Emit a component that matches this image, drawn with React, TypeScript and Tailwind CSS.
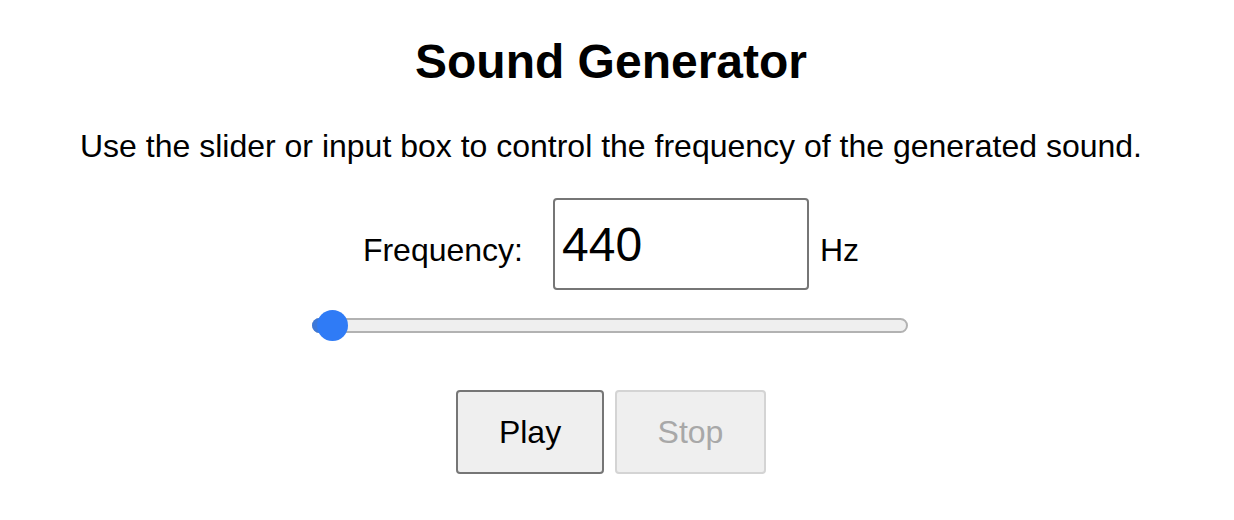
import React from "react";

export default function App() {
  return (
    <div className="w-[1222px] flex flex-col items-center bg-white text-black font-['Liberation_Sans',Arial,sans-serif]">
      <h1 className="mt-[35px] text-[48px] leading-[54px] font-bold">Sound Generator</h1>
      <p className="mt-[39px] text-[32px] leading-[37px]">
        Use the slider or input box to control the frequency of the generated sound.
      </p>
      <div className="mt-[33px] flex items-baseline">
        <label className="text-[32px] leading-[37px]">Frequency:</label>
        <input
          type="text"
          defaultValue="440"
          className="ml-[30px] w-[256px] h-[92px] border-2 border-[#767676] rounded-[4px] px-[7px] text-[48px] leading-[55px] outline-none font-['Liberation_Sans',Arial,sans-serif]"
        />
        <span className="ml-[11px] text-[32px] leading-[37px]">Hz</span>
      </div>
      <div className="mt-[20px] relative w-[596px] h-[32px] ml-[-2px]">
        <div className="absolute left-0 right-0 top-[8px] h-[15px] rounded-full border-2 border-[#b2b2b2] bg-[#efefef]" />
        <div className="absolute left-0 top-[8px] h-[15px] w-[24px] rounded-l-full bg-[#3d78d8]" />
        <div className="absolute left-[5px] top-0 w-[31px] h-[31px] rounded-full bg-[#2f7bf6]" />
      </div>
      <div className="mt-[48px] flex gap-[11px]">
        <button className="w-[148px] h-[84px] border-2 border-[#767676] rounded-[4px] bg-[#efefef] text-[32px] text-black">
          Play
        </button>
        <button
          disabled
          className="w-[151px] h-[84px] border-2 border-[#d4d4d4] rounded-[4px] bg-[#efefef] text-[32px] text-[#a8a8a8]"
        >
          Stop
        </button>
      </div>
    </div>
  );
}
